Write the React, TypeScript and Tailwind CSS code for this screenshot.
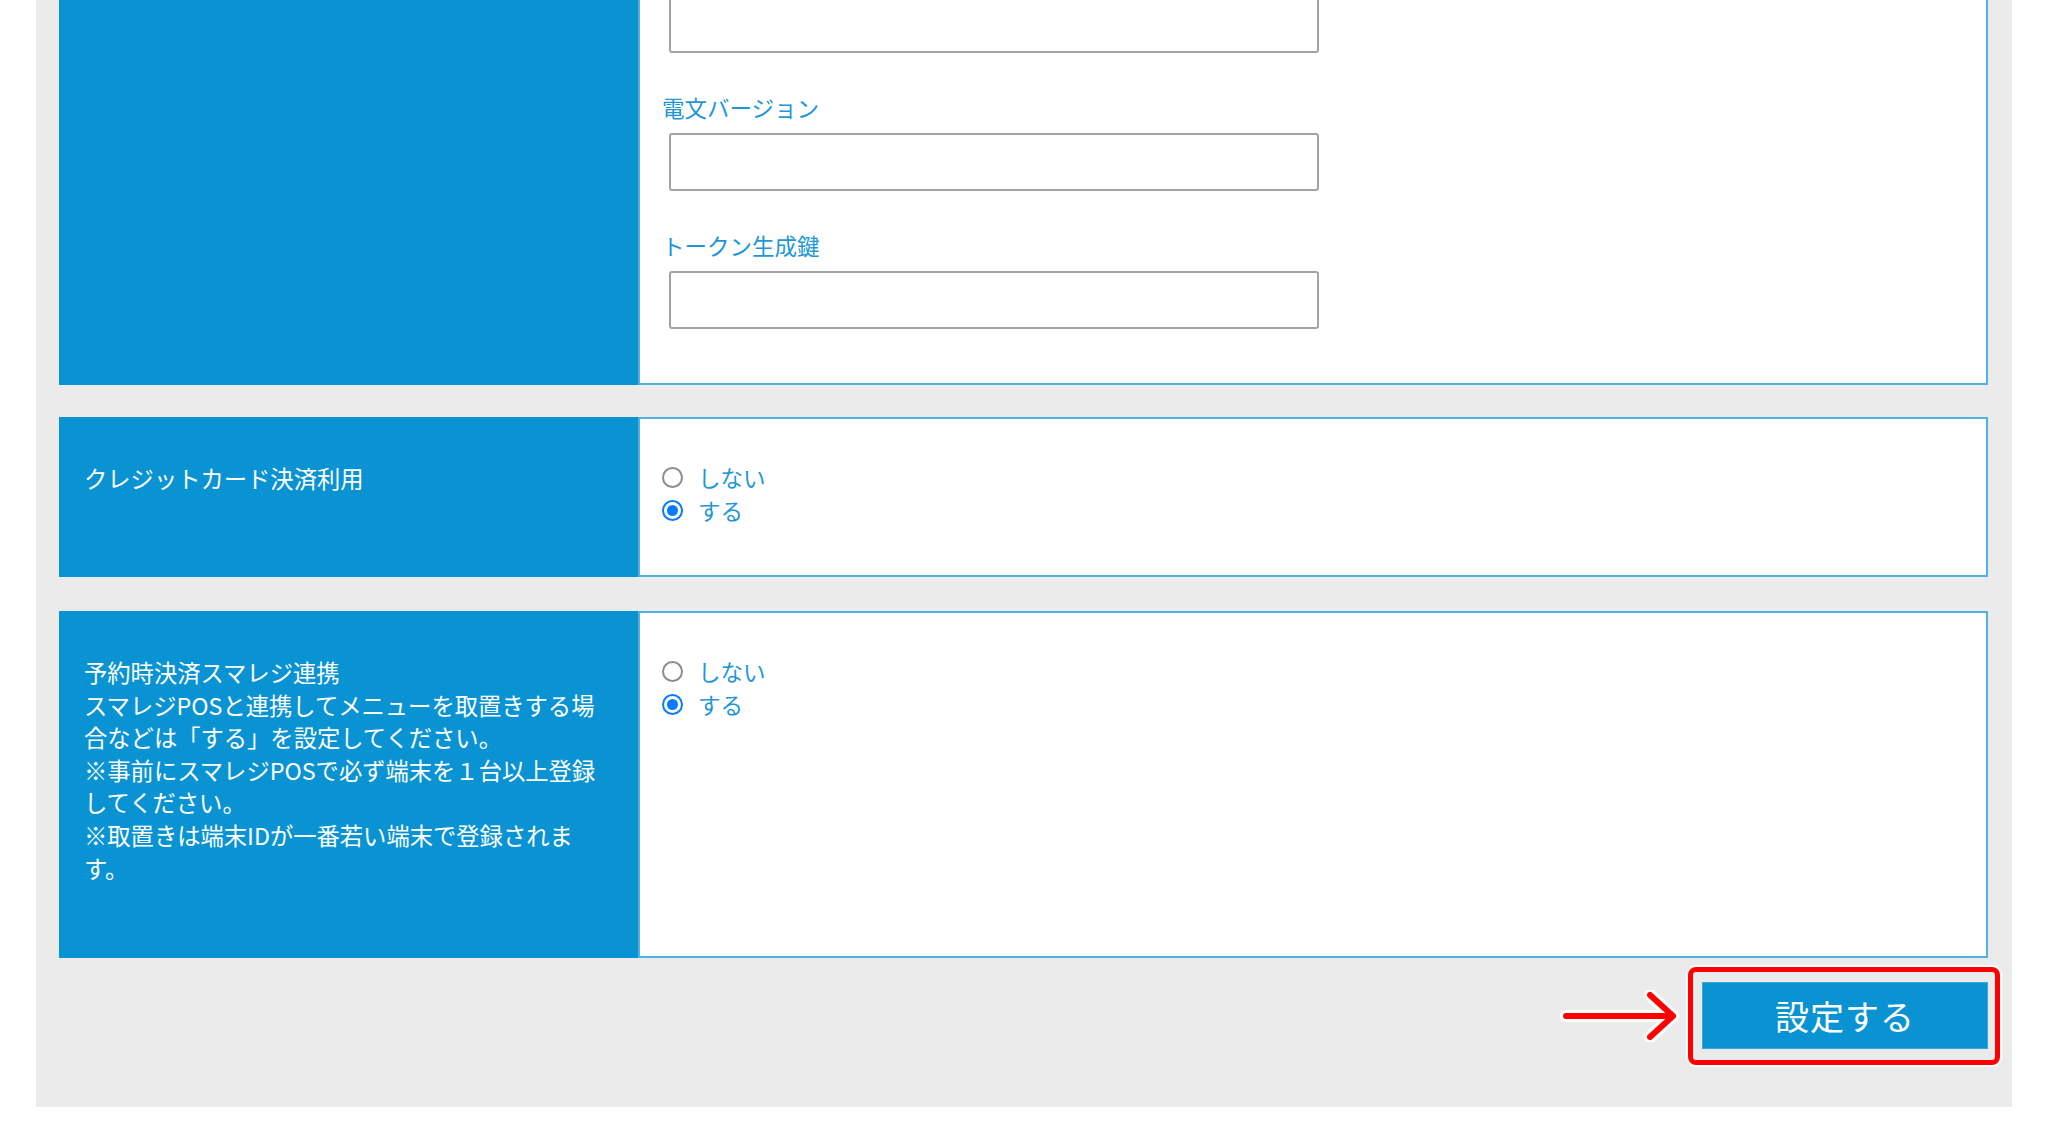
import React from 'react';

const FONT = { fontFamily: '"Noto Sans CJK JP", "Liberation Sans", sans-serif' };

const Radio = ({ checked, label }: { checked?: boolean; label: string }) => (
  <div className="flex items-center h-[33px]">
    {checked ? (
      <span className="w-[21px] h-[21px] rounded-full border-2 border-[#0a7aff] bg-white flex items-center justify-center">
        <span className="w-[11px] h-[11px] rounded-full bg-[#0a7aff]" />
      </span>
    ) : (
      <span className="w-[21px] h-[21px] rounded-full border-2 border-[#8c8c8c] bg-white" />
    )}
    <span className="ml-[15px] text-[22.5px] text-[#1f97d6]">{label}</span>
  </div>
);

const Field = ({ label }: { label: string }) => (
  <>
    <div className="mt-[38px] h-[32px] leading-[32px] text-[22.5px] text-[#1f97d6]">{label}</div>
    <div className="mt-[10px] ml-[7px] w-[650px] h-[58px] border-2 border-[#a3a3a3] rounded-[3px] bg-white" />
  </>
);

export default function App() {
  return (
    <div className="min-h-[1145px] bg-white" style={FONT}>
      <div className="ml-[36px] w-[1976px] bg-[#ebebeb] pl-[23px] pr-[24px]">
        {/* 決済設定（上部） */}
        <div className="grid grid-cols-[579px_1fr]">
          <div className="bg-[#0a93d3]" />
          <div className="bg-white border-x-2 border-b-2 border-[#52b1e3] pl-[22px] pb-[54px]">
            <div className="-mt-[5px] ml-[7px] w-[650px] h-[58px] border-2 border-[#a3a3a3] rounded-[3px] bg-white" />
            <Field label="電文バージョン" />
            <Field label="トークン生成鍵" />
          </div>
        </div>

        {/* クレジットカード決済利用 */}
        <div className="mt-[32px] grid grid-cols-[579px_1fr] h-[160px]">
          <div className="bg-[#0a93d3] pt-[45px] pl-[25px] text-white text-[23.3px] leading-[32.6px]">
            クレジットカード決済利用
          </div>
          <div className="bg-white border-2 border-[#52b1e3] pt-[42px] pl-[22px]">
            <Radio label="しない" />
            <Radio checked label="する" />
          </div>
        </div>

        {/* 予約時決済スマレジ連携 */}
        <div className="mt-[34px] grid grid-cols-[579px_1fr] h-[347px]">
          <div className="bg-[#0a93d3] pt-[45px] pl-[25px] pr-[10px] text-white text-[23.3px] leading-[32.6px] whitespace-nowrap">
            予約時決済スマレジ連携
            <br />
            スマレジPOSと連携してメニューを取置きする場
            <br />
            合などは「する」を設定してください。
            <br />
            ※事前にスマレジPOSで必ず端末を１台以上登録
            <br />
            してください。
            <br />
            ※取置きは端末IDが一番若い端末で登録されま
            <br />
            す。
          </div>
          <div className="bg-white border-2 border-[#52b1e3] pt-[42px] pl-[22px]">
            <Radio label="しない" />
            <Radio checked label="する" />
          </div>
        </div>

        {/* 設定ボタン */}
        <div className="flex justify-end items-center pt-[24px] pb-[58px]">
          <svg width="120" height="52" viewBox="0 0 120 52" className="mr-[22px]">
            <g fill="none" strokeLinecap="round" strokeLinejoin="round">
              <path d="M6 26 H113 M90 5 L113 26 L90 47" stroke="#ffffff" strokeWidth="12" />
              <path d="M6 26 H113 M90 5 L113 26 L90 47" stroke="#ff0000" strokeWidth="6" />
            </g>
          </svg>
          <div className="relative">
            <button className="w-[286px] h-[67px] bg-[#0a93d3] border border-[#3aa6dc] text-white text-[34px] tracking-[1px]">
              設定する
            </button>
            <div className="absolute -left-[14px] -top-[15px] -right-[12px] -bottom-[16px] border-[5px] border-[#ff0000] rounded-[8px] shadow-[0_0_0_2px_#ffffff]" />
          </div>
        </div>
      </div>
    </div>
  );
}
